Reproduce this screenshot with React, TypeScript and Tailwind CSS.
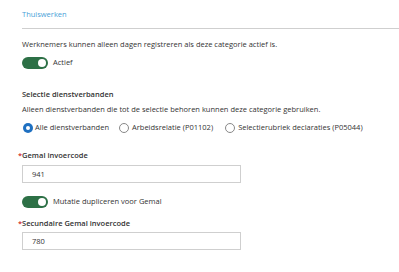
import React from "react";

function Toggle() {
  return (
    <div className="relative h-[12px] w-[26px] shrink-0 rounded-full bg-[#2d7046]">
      <div className="absolute right-[2px] top-[2px] h-[8px] w-[8px] rounded-full bg-white" />
    </div>
  );
}

function Radio({ checked }: { checked?: boolean }) {
  return checked ? (
    <div className="flex h-[10px] w-[10px] shrink-0 items-center justify-center rounded-full bg-[#1f70c1]">
      <div className="h-[4px] w-[4px] rounded-full bg-white" />
    </div>
  ) : (
    <div className="h-[10px] w-[10px] shrink-0 rounded-full border border-[#888] bg-white" />
  );
}

export default function App() {
  return (
    <div
      className="h-[272px] w-[399px] overflow-hidden bg-white pl-[22px] text-[7.5px] leading-[13px] text-[#333]"
      style={{ fontFamily: '"Open Sans", sans-serif' }}
    >
      <div className="pt-[8px] text-[#4a9fd8]">Thuiswerken</div>
      <div className="mt-[7px] border-t border-[#cfcfcf]" />
      <div className="mt-[9px]">
        Werknemers kunnen alleen dagen registreren als deze categorie actief is.
      </div>
      <div className="mt-[5px] flex h-[13px] items-center gap-[5px]">
        <Toggle />
        <span>Actief</span>
      </div>
      <div className="mt-[19px] font-semibold">Selectie dienstverbanden</div>
      <div className="mt-[2px] whitespace-nowrap">
        Alleen dienstverbanden die tot de selectie behoren kunnen deze categorie gebruiken.
      </div>
      <div className="mt-[5px] flex h-[13px] items-center whitespace-nowrap">
        <span className="ml-[1px] flex"><Radio checked /></span>
        <span className="ml-[2px]">Alle dienstverbanden</span>
        <span className="ml-[10px] flex"><Radio /></span>
        <span className="ml-[3px]">Arbeidsrelatie (P01102)</span>
        <span className="ml-[12px] flex"><Radio /></span>
        <span className="ml-[3px]">Selectierubriek declaraties (P05044)</span>
      </div>
      <div className="mt-[15px] -ml-[4px] font-semibold">
        <span className="text-[#d0312d]">*</span>Gemal invoercode
      </div>
      <div className="mt-[3px] flex h-[18px] w-[219px] items-center border border-[#cfcfcf] pl-[9px]">
        941
      </div>
      <div className="mt-[12px] flex h-[13px] items-center gap-[5px]">
        <Toggle />
        <span>Mutatie dupliceren voor Gemal</span>
      </div>
      <div className="mt-[9px] -ml-[4px] font-semibold">
        <span className="text-[#d0312d]">*</span>Secundaire Gemal invoercode
      </div>
      <div className="mt-[2px] flex h-[18px] w-[219px] items-center border border-[#cfcfcf] pl-[9px]">
        780
      </div>
    </div>
  );
}
